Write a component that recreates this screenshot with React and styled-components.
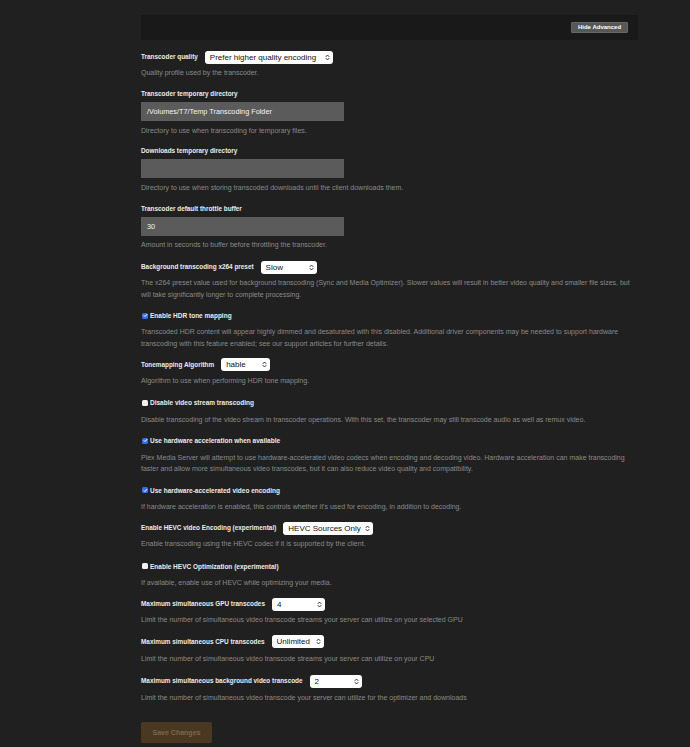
import React from 'react'
import styled, { createGlobalStyle } from 'styled-components'

const Global = createGlobalStyle`
  html, body {
    margin: 0;
    padding: 0;
    background: #202020;
  }
  body {
    font-family: "Liberation Sans", Arial, sans-serif;
  }
`

const Page = styled.div`
  min-height: 747px;
  padding-top: 15px;
  padding-left: 141px;
  box-sizing: border-box;
`

const Column = styled.div`
  width: 497px;
`

const TopBar = styled.div`
  height: 25px;
  background: #191919;
  display: flex;
  align-items: center;
  justify-content: flex-end;
  padding-right: 10px;
  margin-bottom: 10px;
`

const SmallButton = styled.button`
  height: 11px;
  width: 57px;
  padding: 0;
  border: 1px solid #666;
  background: #575757;
  color: #fff;
  font-family: "Liberation Sans", Arial, sans-serif;
  font-weight: bold;
  font-size: 6px;
  line-height: 9px;
  border-radius: 1px;
`

const Setting = styled.div`
  margin-bottom: ${p => p.gap || 10.5}px;
`

const Row = styled.div`
  display: flex;
  align-items: center;
  gap: 7px;
  height: 14px;
`

const Label = styled.div`
  color: #ececec;
  font-weight: bold;
  font-size: 6.4px;
  line-height: 10px;
  white-space: nowrap;
`

const CheckRow = styled.label`
  display: flex;
  align-items: center;
  gap: 2px;
  height: 10px;
  color: #ececec;
  font-weight: bold;
  font-size: 6.5px;
  padding-left: 1px;
`

const Box = styled.span`
  width: 6px;
  height: 6px;
  border-radius: 1.5px;
  background: ${p => (p.checked ? '#2f6fe0' : '#f2f2f2')};
  display: flex;
  align-items: center;
  justify-content: center;
`

const Desc = styled.div`
  color: #8a8a8a;
  font-size: 7px;
  line-height: 11.5px;
  margin-top: ${p => p.top || 3}px;
`

const SelectBox = styled.div`
  width: ${p => p.w}px;
  height: 13px;
  box-sizing: border-box;
  background: #fff;
  border-radius: 3px;
  display: flex;
  align-items: center;
  justify-content: space-between;
  padding: 0 3px 0 5px;
  color: #111;
  font-size: 8px;
  white-space: nowrap;
`

const TextInput = styled.div`
  width: 203px;
  height: 19px;
  margin-top: 3px;
  background: #5b5b5b;
  color: #f4f4f4;
  font-size: 7.3px;
  line-height: 19px;
  padding-left: 6px;
  box-sizing: border-box;
`

const SaveButton = styled.button`
  margin-top: 9px;
  width: 71px;
  height: 21px;
  padding: 0;
  border: none;
  border-radius: 2px;
  background: #4a3920;
  color: #7a684c;
  font-family: "Liberation Sans", Arial, sans-serif;
  font-weight: bold;
  font-size: 7px;
`

const Chevrons = () => (
  <svg width="5" height="7" viewBox="0 0 5 7" fill="none" stroke="#222" strokeWidth="0.9" strokeLinecap="round" strokeLinejoin="round">
    <path d="M1 2.6 L2.5 1 L4 2.6" />
    <path d="M1 4.4 L2.5 6 L4 4.4" />
  </svg>
)

const Check = () => (
  <svg width="5" height="5" viewBox="0 0 5 5" fill="none" stroke="#fff" strokeWidth="1" strokeLinecap="round" strokeLinejoin="round">
    <path d="M1 2.6 L2 3.6 L4 1.3" />
  </svg>
)

const Select = ({ w, value }) => (
  <SelectBox w={w}>
    <span>{value}</span>
    <Chevrons />
  </SelectBox>
)

const Checkbox = ({ checked, children }) => (
  <CheckRow>
    <Box checked={checked}>{checked && <Check />}</Box>
    {children}
  </CheckRow>
)

export default function App() {
  return (
    <>
      <Global />
      <Page>
        <Column>
          <TopBar>
            <SmallButton>Hide Advanced</SmallButton>
          </TopBar>

          <Setting>
            <Row>
              <Label>Transcoder quality</Label>
              <Select w={128} value="Prefer higher quality encoding" />
            </Row>
            <Desc>Quality profile used by the transcoder.</Desc>
          </Setting>

          <Setting gap={9.5}>
            <Label>Transcoder temporary directory</Label>
            <TextInput>/Volumes/T7/Temp Transcoding Folder</TextInput>
            <Desc top={4}>Directory to use when transcoding for temporary files.</Desc>
          </Setting>

          <Setting>
            <Label>Downloads temporary directory</Label>
            <TextInput></TextInput>
            <Desc top={3.5}>Directory to use when storing transcoded downloads until the client downloads them.</Desc>
          </Setting>

          <Setting gap={9.5}>
            <Label>Transcoder default throttle buffer</Label>
            <TextInput>30</TextInput>
            <Desc top={3.5}>Amount in seconds to buffer before throttling the transcoder.</Desc>
          </Setting>

          <Setting>
            <Row>
              <Label>Background transcoding x264 preset</Label>
              <Select w={56} value="Slow" />
            </Row>
            <Desc>
              The x264 preset value used for background transcoding (Sync and Media Optimizer). Slower values will result in better video quality and smaller file sizes, but will take significantly longer to complete processing.
            </Desc>
          </Setting>

          <Setting gap={8.5}>
            <Checkbox checked>Enable HDR tone mapping</Checkbox>
            <Desc top={5.5}>
              Transcoded HDR content will appear highly dimmed and desaturated with this disabled. Additional driver components may be needed to support hardware transcoding with this feature enabled; see our support articles for further details.
            </Desc>
          </Setting>

          <Setting gap={11.5}>
            <Row>
              <Label>Tonemapping Algorithm</Label>
              <Select w={49} value="hable" />
            </Row>
            <Desc>Algorithm to use when performing HDR tone mapping.</Desc>
          </Setting>

          <Setting>
            <Checkbox>Disable video stream transcoding</Checkbox>
            <Desc top={6}>Disable transcoding of the video stream in transcoder operations. With this set, the transcoder may still transcode audio as well as remux video.</Desc>
          </Setting>

          <Setting>
            <Checkbox checked>Use hardware acceleration when available</Checkbox>
            <Desc top={6}>
              Plex Media Server will attempt to use hardware-accelerated video codecs when encoding and decoding video. Hardware acceleration can make transcoding faster and allow more simultaneous video transcodes, but it can also reduce video quality and compatibility.
            </Desc>
          </Setting>

          <Setting gap={9}>
            <Checkbox checked>Use hardware-accelerated video encoding</Checkbox>
            <Desc top={5.5}>If hardware acceleration is enabled, this controls whether it's used for encoding, in addition to decoding.</Desc>
          </Setting>

          <Setting gap={11.5}>
            <Row>
              <Label>Enable HEVC video Encoding (experimental)</Label>
              <Select w={90} value="HEVC Sources Only" />
            </Row>
            <Desc>Enable transcoding using the HEVC codec if it is supported by the client.</Desc>
          </Setting>

          <Setting gap={9}>
            <Checkbox>Enable HEVC Optimization (experimental)</Checkbox>
            <Desc top={5.5}>If available, enable use of HEVC while optimizing your media.</Desc>
          </Setting>

          <Setting gap={9}>
            <Row>
              <Label>Maximum simultaneous GPU transcodes</Label>
              <Select w={53} value="4" />
            </Row>
            <Desc>Limit the number of simultaneous video transcode streams your server can utilize on your selected GPU</Desc>
          </Setting>

          <Setting gap={10}>
            <Row>
              <Label>Maximum simultaneous CPU transcodes</Label>
              <Select w={52} value="Unlimited" />
            </Row>
            <Desc top={4}>Limit the number of simultaneous video transcode streams your server can utilize on your CPU</Desc>
          </Setting>

          <Setting gap={9}>
            <Row>
              <Label>Maximum simultaneous background video transcode</Label>
              <Select w={52} value="2" />
            </Row>
            <Desc top={4}>Limit the number of simultaneous video transcode your server can utilize for the optimizer and downloads</Desc>
          </Setting>

          <SaveButton>Save Changes</SaveButton>
        </Column>
      </Page>
    </>
  )
}
